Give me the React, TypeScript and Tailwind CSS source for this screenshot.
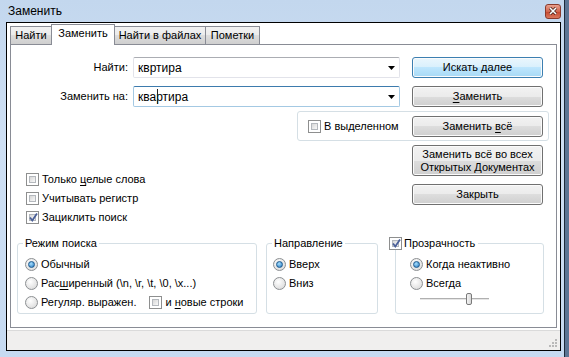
import React from 'react';

const Checkbox = ({ checked = false }: { checked?: boolean }) => (
  <span className="relative flex h-[13px] w-[13px] shrink-0 border border-[#8e8f8f] bg-white p-[2px]">
    <span className="flex-1 border border-[#b4b8bd] bg-[linear-gradient(135deg,#d7d7d7,#f9f9f9)]" />
    {checked && (
      <svg className="absolute left-[1px] top-[0px] h-[11px] w-[11px]" viewBox="0 0 11 11">
        <path d="M2 5.5 L4.3 8.5 L9 1.5" fill="none" stroke="#4a5f98" strokeWidth="1.8" />
      </svg>
    )}
  </span>
);

const Radio = ({ checked = false }: { checked?: boolean }) => (
  <span className="flex h-[13px] w-[13px] shrink-0 items-center justify-center rounded-full border border-[#8c8f92] bg-[radial-gradient(circle_at_40%_35%,#ffffff,#d4d4d4)]">
    {checked && (
      <span className="h-[7px] w-[7px] rounded-full border border-[#1d5a8e] bg-[radial-gradient(circle_at_40%_35%,#a8e0ff,#1f74bd)]" />
    )}
  </span>
);

const Button = ({
  children,
  primary = false,
  tall = false,
}: {
  children: React.ReactNode;
  primary?: boolean;
  tall?: boolean;
}) => (
  <div
    className={`flex w-[131px] flex-col items-center justify-center rounded-[3px] border text-center leading-[13px] shadow-[inset_0_0_0_1px_#fbfbfb] ${
      tall ? 'h-[31px]' : 'h-[21px]'
    } ${
      primary
        ? 'border-[#3c7fb1] bg-[linear-gradient(to_bottom,#eaf6fd_0%,#d9f0fc_50%,#bee6fd_50%,#a7d9f5_100%)]'
        : 'border-[#707070] bg-[linear-gradient(to_bottom,#f2f2f2_0%,#ebebeb_50%,#dddddd_50%,#cfcfcf_100%)]'
    }`}
  >
    {children}
  </div>
);

const Combo = ({ value, focused = false, caret = false }: { value: string; focused?: boolean; caret?: boolean }) => (
  <div
    className={`relative ml-[5px] flex h-[21px] w-[267px] items-center rounded-[2px] border bg-white pl-[4px] ${
      focused ? 'border-[#a4c9e3] border-t-[#3d7bad]' : 'border-[#e2e3ea] border-t-[#abadb3]'
    }`}
  >
    <span className="text-[12px]">{value}</span>
    {caret && <span className="absolute left-[23px] top-[2px] h-[15px] w-[1px] bg-[#222]" />}
    <svg className="absolute right-[4px] top-[8px] h-[4px] w-[7px]" viewBox="0 0 7 4">
      <path d="M0 0 H7 L3.5 4 Z" fill="#000" />
    </svg>
  </div>
);

const Opt = ({ children, radio = false, checked = false }: { children: React.ReactNode; radio?: boolean; checked?: boolean }) => (
  <div className="flex h-[19px] items-center gap-[3px]">
    {radio ? <Radio checked={checked} /> : <Checkbox checked={checked} />}
    <span>{children}</span>
  </div>
);

const Tab = ({ label, w, active = false }: { label: string; w: string; active?: boolean }) => (
  <div
    className={`-ml-[1px] flex items-center justify-center border border-b-0 border-[#898c95] first:ml-0 ${w} ${
      active
        ? 'relative z-10 -mb-[1px] h-[21px] bg-white pb-[3px]'
        : 'h-[18px] bg-[linear-gradient(to_bottom,#f2f2f2_0%,#ebebeb_50%,#dddddd_50%,#cfcfcf_100%)]'
    }`}
  >
    {label}
  </div>
);

export default function App() {
  return (
    <div className="h-[357px] w-[569px] overflow-hidden bg-[#5c7594] font-['Liberation_Sans',Arial,sans-serif] text-[11px] text-black">
      <div className="flex h-[357px] w-[565px] flex-col border-r border-[#1d2a3a] bg-[linear-gradient(to_bottom,#c3d7ee,#cfe0f4_40%,#c6daf1)]">
        {/* title bar */}
        <div className="flex h-[22px] items-center pl-[8px] pr-[3px]">
          <span className="text-[12px]">Заменить</span>
          <div className="ml-auto flex h-[15px] w-[16px] items-center justify-center rounded-[3px] border border-[#8a3a2c] bg-[linear-gradient(to_bottom,#e8a08e,#d2664f_50%,#c4452c_51%,#d9785e)]">
            <svg className="h-[8px] w-[8px]" viewBox="0 0 8 8">
              <path d="M1 1 L7 7 M7 1 L1 7" stroke="#3a1a14" strokeWidth="3" />
              <path d="M1 1 L7 7 M7 1 L1 7" stroke="#ffffff" strokeWidth="1.6" />
            </svg>
          </div>
        </div>

        {/* client area */}
        <div className="ml-[6px] flex h-[329px] w-[555px] flex-col border border-black bg-white">
          {/* tabs */}
          <div className="mt-[1px] flex h-[20px] items-end pl-[3px]">
            <Tab label="Найти" w="w-[42px]" />
            <Tab label="Заменить" w="w-[64px]" active />
            <Tab label="Найти в файлах" w="w-[92px]" />
            <Tab label="Пометки" w="w-[55px]" />
          </div>

          {/* tab panel */}
          <div className="ml-[3px] flex h-[284px] w-[547px] flex-col border border-[#898c95] bg-white">
            <div className="mt-[12px] flex h-[21px] items-center">
              <span className="w-[117px] text-right">Найти:</span>
              <Combo value="квртира" />
              <div className="ml-[12px]">
                <Button primary>Искать далее</Button>
              </div>
            </div>
            <div className="mt-[8px] flex h-[21px] items-center">
              <span className="w-[117px] text-right">Заменить на:</span>
              <Combo value="квартира" focused caret />
              <div className="ml-[12px]">
                <Button>
                  <span>
                    <u className="underline-offset-2">З</u>аменить
                  </span>
                </Button>
              </div>
            </div>

            <div className="ml-[286px] mt-[4px] flex h-[30px] w-[252px] items-center justify-between rounded-[3px] border border-[#d5dfe5] pl-[10px] pr-[5px]">
              <Opt>В выделенном</Opt>
              <Button>
                <span>
                  Заменить <u className="underline-offset-2">в</u>сё
                </span>
              </Button>
            </div>

            <div className="flex">
              <div className="flex w-[401px] flex-col pl-[15px] pt-[29px]">
                <Opt>
                  Только <u className="underline-offset-2">ц</u>елые слова
                </Opt>
                <Opt>Учитывать регистр</Opt>
                <Opt checked>Зациклить поиск</Opt>
              </div>
              <div className="mt-[4px] flex flex-col gap-[8px]">
                <Button tall>
                  <span>Заменить всё во всех</span>
                  <span>Открытых Документах</span>
                </Button>
                <Button>Закрыть</Button>
              </div>
            </div>

            <div className="mt-[16px] flex">
              <div className="relative ml-[6px] h-[71px] w-[240px] rounded-[3px] border border-[#d5dfe5] pl-[7px] pt-[11px]">
                <span className="absolute left-[5px] top-[-7px] bg-white px-[2px] leading-[13px]">Режим поиска</span>
                <Opt radio checked>
                  Обычный
                </Opt>
                <Opt radio>
                  Рас<u className="underline-offset-2">ш</u>иренный (\n, \r, \t, \0, \x...)
                </Opt>
                <div className="flex h-[19px] items-center">
                  <Opt radio>Регуляр. выражен.</Opt>
                  <div className="ml-[13px] flex items-center gap-[3px]">
                    <Checkbox />
                    <span>
                      и <u className="underline-offset-2">н</u>овые строки
                    </span>
                  </div>
                </div>
              </div>

              <div className="relative ml-[9px] h-[71px] w-[112px] rounded-[3px] border border-[#d5dfe5] pl-[6px] pt-[11px]">
                <span className="absolute left-[5px] top-[-7px] bg-white px-[2px] leading-[13px]">Направление</span>
                <Opt radio checked>
                  Вверх
                </Opt>
                <Opt radio>Вниз</Opt>
              </div>

              <div className="relative ml-[17px] h-[71px] w-[149px] rounded-[3px] border border-[#d5dfe5] pl-[14px] pt-[11px]">
                <div className="absolute left-[-7px] top-[-7px] flex items-center gap-[2px] bg-white pr-[3px] leading-[13px]">
                  <Checkbox checked />
                  <span>Прозрачность</span>
                </div>
                <Opt radio checked>
                  Когда неактивно
                </Opt>
                <Opt radio>Всегда</Opt>
                <div className="relative ml-[10px] flex h-[12px] w-[69px] items-center">
                  <div className="h-[2px] w-full border-t border-[#b0b0b0] bg-[#e6e6e6]" />
                  <div className="absolute left-[46px] top-0 h-[12px] w-[6px] rounded-[2px] border border-[#7a7a7a] bg-[linear-gradient(to_right,#f4f4f4,#d8d8d8)]" />
                </div>
              </div>
            </div>
          </div>

          <div className="mt-[2px] flex h-[20px] items-end justify-end border-t border-[#dadada] bg-[#f0efee] pb-[2px] pr-[2px]">
            <svg className="h-[10px] w-[10px]" viewBox="0 0 10 10">
              <rect x="7" y="1" width="2" height="2" fill="#b9b9b9" />
              <rect x="4" y="4" width="2" height="2" fill="#b9b9b9" />
              <rect x="7" y="4" width="2" height="2" fill="#b9b9b9" />
              <rect x="1" y="7" width="2" height="2" fill="#b9b9b9" />
              <rect x="4" y="7" width="2" height="2" fill="#b9b9b9" />
              <rect x="7" y="7" width="2" height="2" fill="#b9b9b9" />
            </svg>
          </div>
        </div>
      </div>
    </div>
  );
}
